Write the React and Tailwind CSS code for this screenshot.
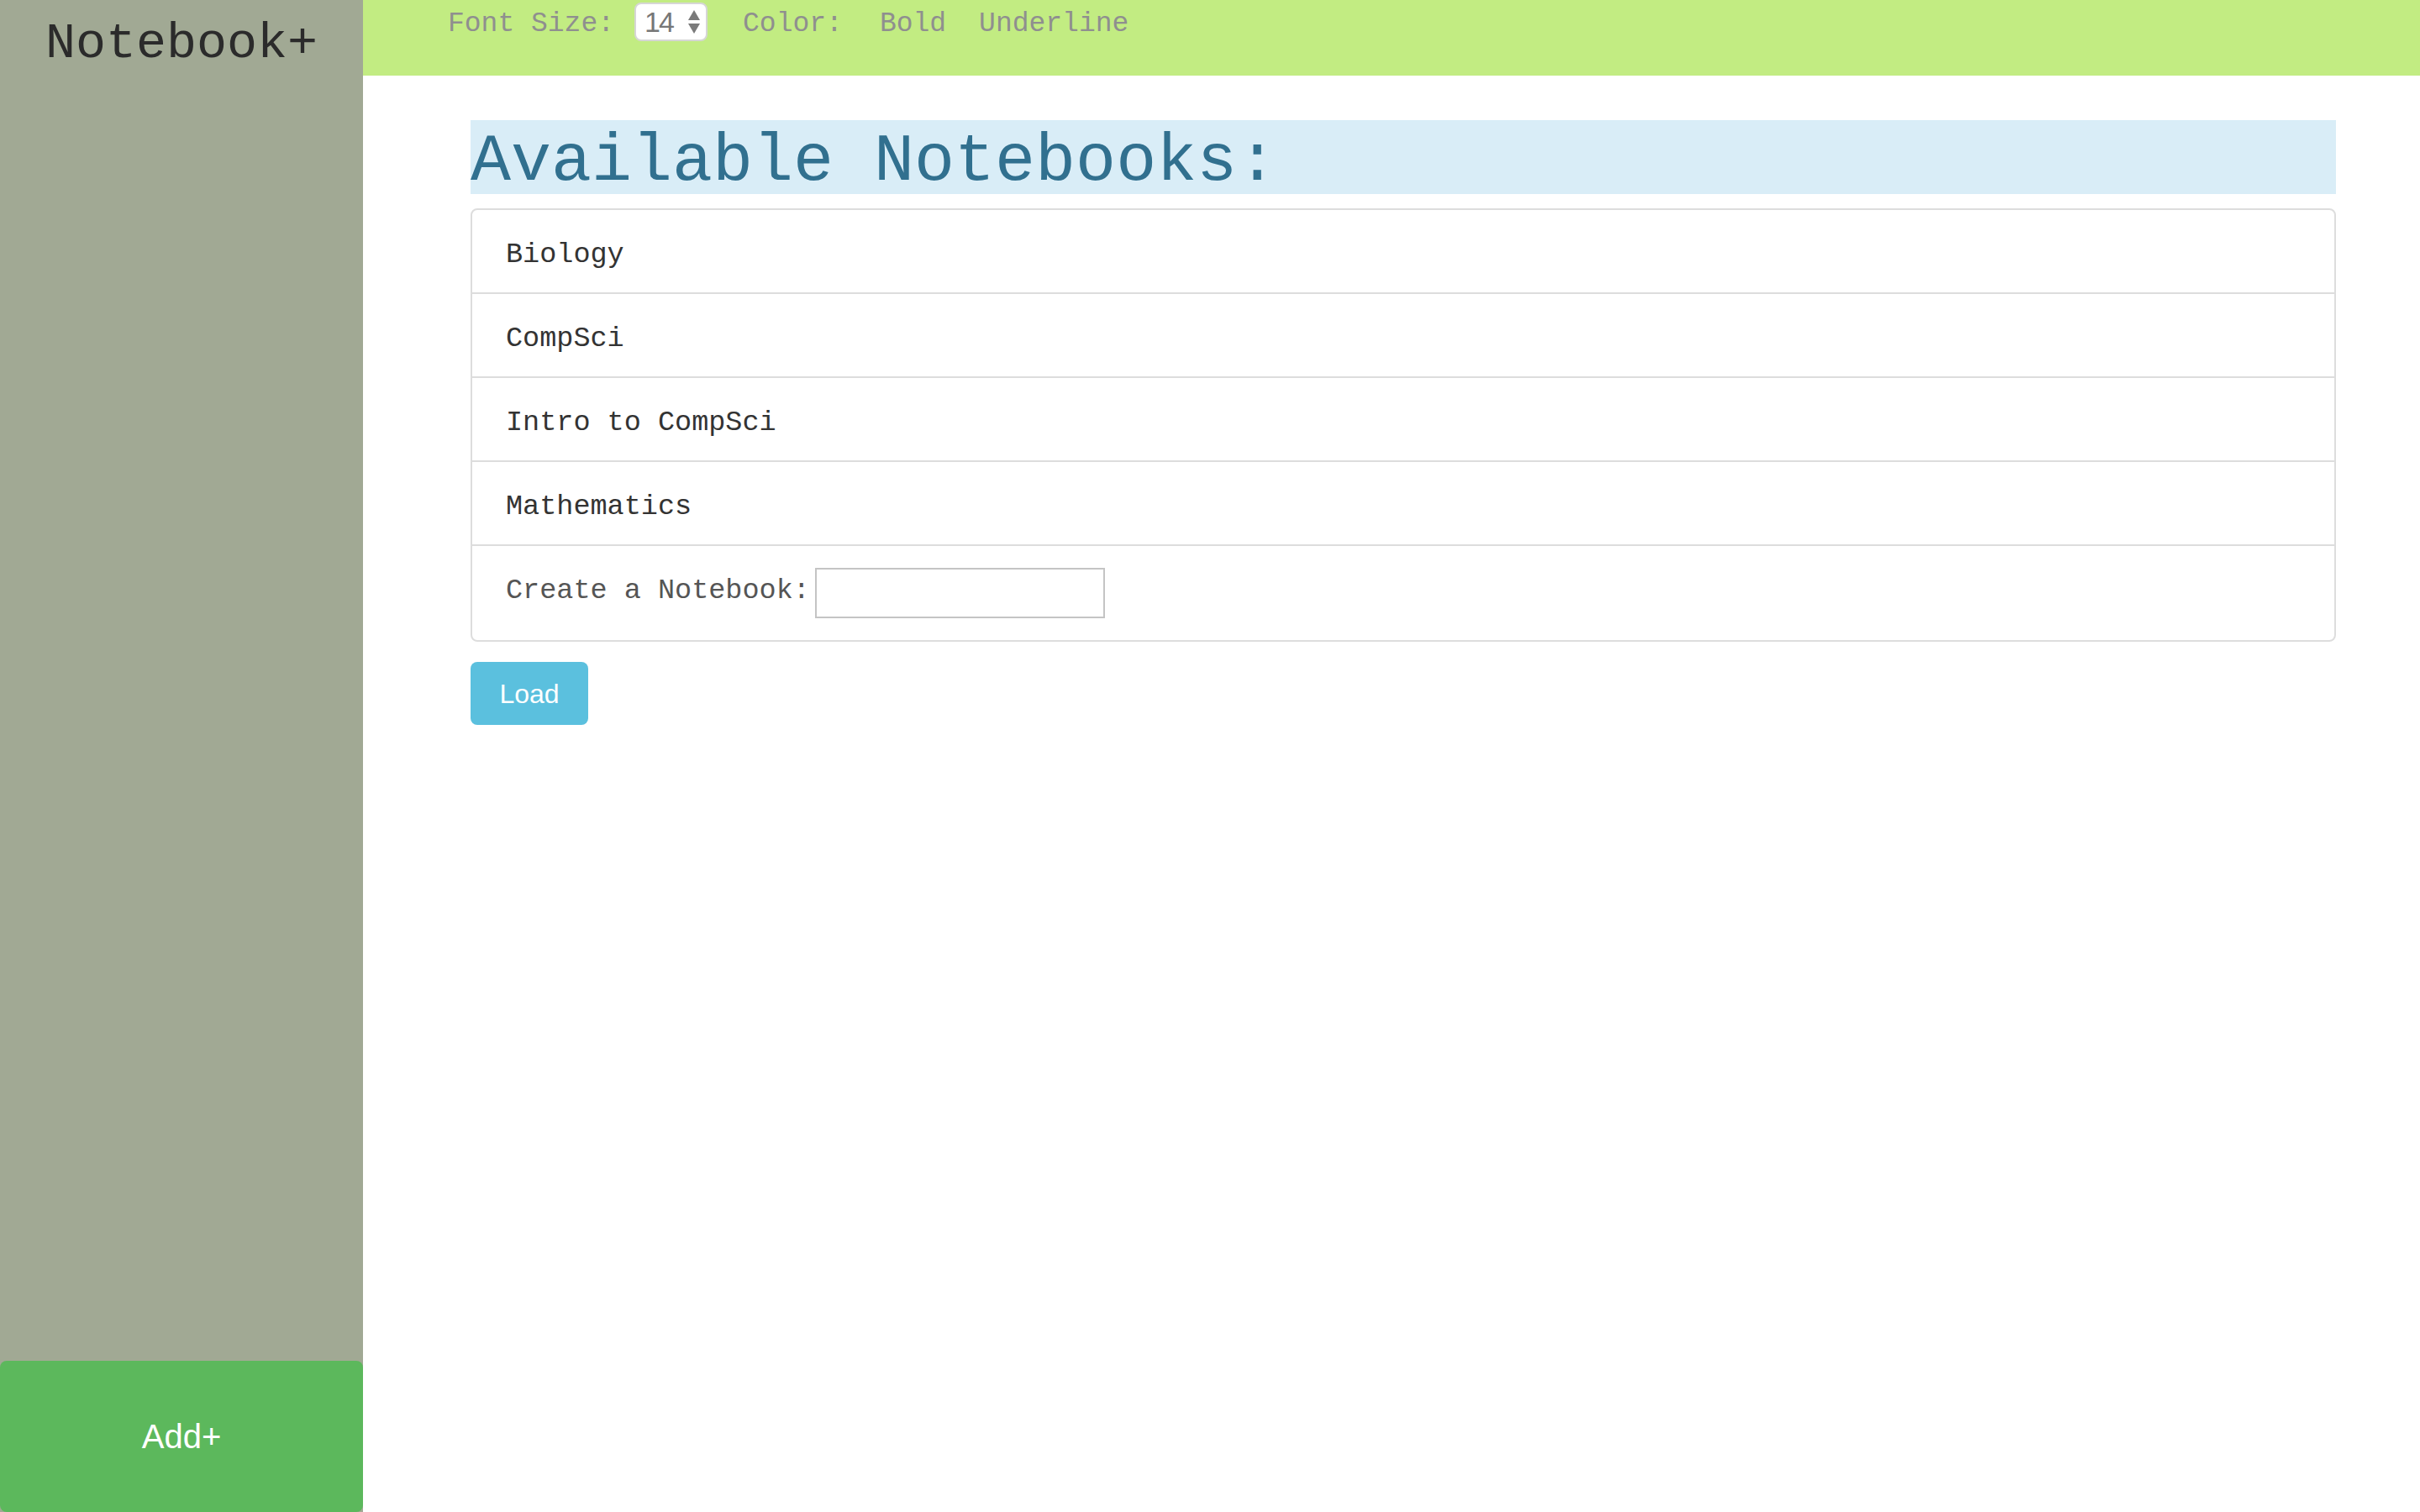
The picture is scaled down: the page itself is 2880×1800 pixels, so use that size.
import React from 'react';

const notebooks = ['Biology', 'CompSci', 'Intro to CompSci', 'Mathematics'];

export default function App() {
    return (
        <div className="flex h-[1800px] w-[2880px] bg-white">
            {/* Sidebar */}
            <aside className="flex w-[432px] shrink-0 flex-col justify-between bg-[#a1a994]">
                <div className="pt-[19px] text-center font-['Liberation_Mono',monospace] text-[60px] leading-[66px] text-[#2b2b2b]">
                    Notebook+
                </div>
                <button className="h-[180px] w-full rounded-[8px] bg-[#5cb85c] font-['Liberation_Sans',sans-serif] text-[40px] text-white">
                    Add+
                </button>
            </aside>

            <main className="flex flex-1 flex-col">
                {/* Toolbar */}
                <div className="h-[90px] bg-[#c2ec82] pl-[101px]">
                    <div className="flex h-[52px] items-center font-['Liberation_Mono',monospace] text-[33px] text-[#8f8f8f]">
                        <span className="pt-[6px]">Font Size:</span>
                        <div className="ml-[24px] flex h-[46px] w-[87px] items-center justify-between rounded-[8px] border-2 border-[#d6d6d6] bg-white pl-[10px] pr-[6px]">
                            <span className="font-['Liberation_Sans',sans-serif] text-[34px] leading-none tracking-[-2px] text-[#777]">14</span>
                            <svg width="16" height="30" viewBox="0 0 16 30">
                                <path d="M8 1 L15 13 L1 13 Z" fill="#7a7a7a" />
                                <path d="M1 17 L15 17 L8 29 Z" fill="#7a7a7a" />
                            </svg>
                        </div>
                        <span className="ml-[42px] pt-[6px]">Color:</span>
                        <span className="ml-[44px] pt-[6px]">Bold</span>
                        <span className="ml-[39px] pt-[6px]">Underline</span>
                    </div>
                </div>

                {/* Content */}
                <div className="pl-[128px] pr-[100px] pt-[53px]">
                    <h1 className="h-[88px] bg-[#d9edf7] pt-[11px] font-['Liberation_Mono',monospace] text-[80px] leading-[77px] text-[#31708f]">
                        Available Notebooks:
                    </h1>

                    <div className="mt-[17px] rounded-[8px] border-2 border-[#dddddd] font-['Liberation_Mono',monospace] text-[33.5px] text-[#333]">
                        {notebooks.map((name, i) => (
                            <div
                                key={name}
                                className={`flex h-[98px] items-center pl-[40px] pt-[8px] ${i > 0 ? 'border-t-2 border-[#dddddd] h-[100px]' : ''}`}
                            >
                                {name}
                            </div>
                        ))}
                        <div className="flex h-[114px] items-center border-t-2 border-[#dddddd] pl-[40px] text-[#555]">
                            <span className="mb-[6px]">Create a Notebook:</span>
                            <input
                                type="text"
                                className="ml-[6px] h-[60px] w-[345px] border-2 border-[#c4c4c4] bg-white"
                            />
                        </div>
                    </div>

                    <button className="mt-[24px] h-[75px] w-[140px] rounded-[8px] bg-[#5bc0de] font-['Liberation_Sans',sans-serif] text-[32px] text-white">
                        Load
                    </button>
                </div>
            </main>
        </div>
    );
}
